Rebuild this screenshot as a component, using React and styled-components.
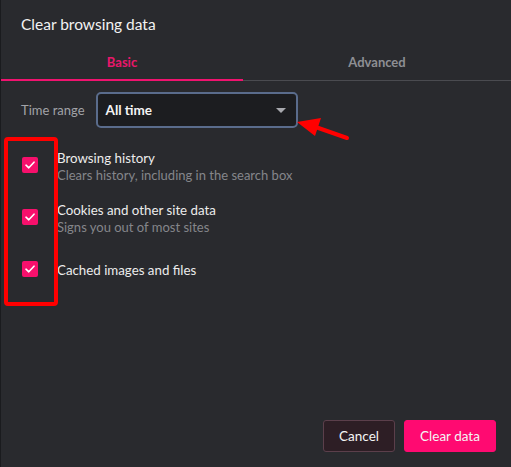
import React from 'react';
import styled, { createGlobalStyle } from 'styled-components';

const Global = createGlobalStyle`
  html, body { margin: 0; padding: 0; background: #292a2e; }
  body { font-family: Lato, "Noto Sans", sans-serif; }
`

const Dialog = styled.div`
  position: relative;
  width: 511px;
  height: 467px;
  box-sizing: border-box;
  background: #292a2e;
  border-left: 1px solid #1a1b1e;
  display: flex;
  flex-direction: column;
  color: #ececec;
`

const Title = styled.div`
  padding: 15px 0 0 20px;
  height: 29px;
  font-size: 15.5px;
  color: #f2f2f2;
`

const Tabs = styled.div`
  display: flex;
  height: 36px;
  border-bottom: 1px solid #4a4b50;
`

const Tab = styled.div`
  flex: ${p => (p.$grow ? 1 : '0 0 242px')};
  display: flex;
  align-items: center;
  justify-content: center;
  font-size: 13px;
  font-weight: 700;
  color: ${p => (p.$active ? '#e8176b' : '#8e8f94')};
  border-bottom: 2px solid ${p => (p.$active ? '#f0136f' : 'transparent')};
  margin-bottom: -1px;
`

const Body = styled.div`
  flex: 1;
  padding: 11px 20px 0 20px;
  display: flex;
  flex-direction: column;
`

const RangeRow = styled.div`
  display: flex;
  align-items: center;
  gap: 11px;
`

const Label = styled.span`
  font-size: 13px;
  color: #a2a3a8;
`

const Select = styled.div`
  width: 202px;
  height: 36px;
  box-sizing: border-box;
  border: 2px solid #5a6c8c;
  border-radius: 5px;
  background: #1c1d20;
  display: flex;
  align-items: center;
  justify-content: space-between;
  padding: 0 10px 0 8px;
  font-size: 13.5px;
  font-weight: 700;
  color: #f4f4f4;
`

const Caret = styled.span`
  width: 0;
  height: 0;
  border-left: 5px solid transparent;
  border-right: 5px solid transparent;
  border-top: 5px solid #a8a9ae;
`

const List = styled.div`
  margin-top: 13px;
  display: flex;
  flex-direction: column;
  gap: 4px;
`

const Item = styled.div`
  display: flex;
  align-items: center;
  min-height: 48px;
  gap: 19px;
`

const Box = styled.span`
  flex: 0 0 16px;
  height: 16px;
  border-radius: 2px;
  background: #f7106c;
  display: flex;
  align-items: center;
  justify-content: center;
  margin-left: 1px;
`

const Text = styled.div`
  display: flex;
  flex-direction: column;
  line-height: 17px;
  padding-top: 3px;
`

const Name = styled.span`
  font-size: 13.3px;
  color: #ececec;
`

const Hint = styled.span`
  font-size: 13px;
  color: #85868b;
`

const Footer = styled.div`
  display: flex;
  justify-content: flex-end;
  gap: 9px;
  padding: 0 15px 15px 0;
`

const Button = styled.button`
  height: 32px;
  padding: 0;
  border-radius: 3px;
  font-family: inherit;
  font-size: 13.5px;
  color: #f4f4f4;
  background: ${p => (p.$primary ? '#ff0a71' : '#2d1e25')};
  border: 1px solid ${p => (p.$primary ? '#ff0a71' : '#5b3f4b')};
  width: ${p => (p.$primary ? '92px' : '72px')};
`

const Highlight = styled.div`
  position: absolute;
  left: 3px;
  top: 137px;
  width: 54px;
  height: 169px;
  box-sizing: border-box;
  border: 4px solid #ff0000;
  border-radius: 4px;
`

const Pointer = styled.svg`
  position: absolute;
  left: 290px;
  top: 112px;
`

const items = [
  { name: 'Browsing history', hint: 'Clears history, including in the search box' },
  { name: 'Cookies and other site data', hint: 'Signs you out of most sites' },
  { name: 'Cached images and files' },
]

function Check() {
  return (
    <svg width="10" height="8" viewBox="0 0 10 8">
      <path d="M1 4.2 L3.8 6.8 L9 1.2" fill="none" stroke="#fff" strokeWidth="1.6" strokeLinecap="round" strokeLinejoin="round" />
    </svg>
  )
}

export default function App() {
  return (
    <>
      <Global />
      <Dialog>
        <Title>Clear browsing data</Title>
        <Tabs>
          <Tab $active>Basic</Tab>
          <Tab $grow>Advanced</Tab>
        </Tabs>
        <Body>
          <RangeRow>
            <Label>Time range</Label>
            <Select>
              <span>All time</span>
              <Caret />
            </Select>
          </RangeRow>
          <List>
            {items.map(it => (
              <Item key={it.name}>
                <Box><Check /></Box>
                <Text>
                  <Name>{it.name}</Name>
                  {it.hint && <Hint>{it.hint}</Hint>}
                </Text>
              </Item>
            ))}
          </List>
        </Body>
        <Footer>
          <Button>Cancel</Button>
          <Button $primary>Clear data</Button>
        </Footer>
        <Highlight />
        <Pointer width="64" height="34" viewBox="0 0 64 34">
          <line x1="56" y1="26" x2="16" y2="12" stroke="#ff0000" strokeWidth="4" strokeLinecap="round" />
          <polygon points="6,10 30,6 24,24" fill="#ff0000" />
        </Pointer>
      </Dialog>
    </>
  )
}
